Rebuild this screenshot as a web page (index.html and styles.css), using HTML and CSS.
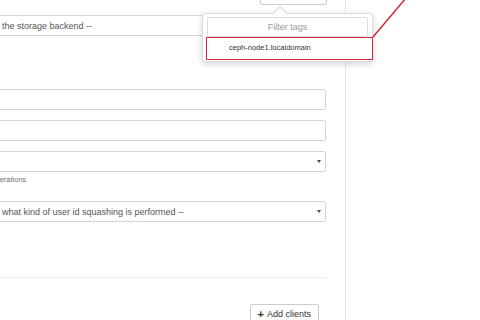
FILE: index.html
```html
<!DOCTYPE html>
<html lang="en">
<head>
  <meta charset="UTF-8">
  <title>NFS export</title>
  <link rel="stylesheet" href="styles.css">
</head>
<body>
  <div class="page">
    <div class="main">
      <form class="form">
        <div class="row-right top-row">
          <button type="button" class="btn">Add daemon</button>
        </div>

        <div class="select-wrap first">
          <select class="field">
            <option>-- Select the storage backend --</option>
          </select>
        </div>

        <input class="field gap-big" type="text">
        <input class="field" type="text">

        <div class="select-wrap">
          <select class="field">
            <option></option>
          </select>
        </div>
        <p class="help">Allows all operations</p>

        <div class="select-wrap squash">
          <select class="field">
            <option>-- Select what kind of user id squashing is performed --</option>
          </select>
        </div>

        <hr class="divider">

        <div class="row-right">
          <button type="button" class="btn"><span class="plus">+</span> Add clients</button>
        </div>
      </form>
    </div>
    <div class="side"></div>

    <!-- tag picker opened from the button above -->
    <div class="popover">
      <div class="popover-arrow"></div>
      <input class="filter" type="text" placeholder="Filter tags">
      <div class="tag-item">ceph-node1.localdomain</div>
    </div>

    <!-- annotation -->
    <div class="mark-box"></div>
    <svg class="mark-line" width="480" height="320" viewBox="0 0 480 320">
      <line x1="373" y1="37" x2="406" y2="-2" stroke="#d7263d" stroke-width="1.5"/>
    </svg>
  </div>
</body>
</html>
```

FILE: styles.css
```css
* { box-sizing: border-box; }
body { margin: 0; font-family: "Liberation Sans", Arial, sans-serif; background: #fff; }
.page { position: relative; display: flex; width: 480px; height: 320px; overflow: hidden; }

.main { width: 346px; border-right: 1px solid #e7e7e7; padding-right: 19px; }
.side { flex: 1; }

.form { margin-left: -42px; font-size: 9px; color: #555; }
.row-right { display: flex; justify-content: flex-end; }
.top-row { margin-top: -15px; margin-right: -1px; }

.btn { font: 9px "Liberation Sans", Arial, sans-serif; color: #333; background: #fff; border: 1px solid #ccc; border-radius: 2px; height: 20px; padding: 0 7px; display: flex; align-items: center; gap: 3px; }
.plus { font-weight: bold; font-size: 11px; line-height: 1; }

.field { display: block; width: 100%; height: 21px; border: 1px solid #d4d4d4; border-radius: 2px; background: #fff; font: 9px "Liberation Sans", Arial, sans-serif; color: #555; padding: 0 7px; margin: 0; -webkit-appearance: none; appearance: none; outline: none; }
input.field { margin-top: 10px; }
.select-wrap { position: relative; margin-top: 10px; }
.select-wrap::after { content: ""; position: absolute; right: 5px; top: 9px; border-left: 2.5px solid transparent; border-right: 2.5px solid transparent; border-top: 3px solid #444; }
.first { margin-top: 10px; }
.gap-big { margin-top: 53px !important; }

.help { margin: 3px 0 0; font-size: 7.5px; color: #737373; line-height: 10px; }
.squash { margin-top: 16px; }

.divider { border: 0; border-top: 1px solid #eee; margin: 55px 0 0; }
.form .row-right:last-child { margin-top: 26px; margin-right: 7px; }

.popover { position: absolute; left: 202px; top: 13px; width: 171px; height: 49px; padding: 3px 4px 2px; background: #fff; border: 1px solid #dcdcdc; border-radius: 3px; box-shadow: 0 2px 6px rgba(0, 0, 0, 0.18); }
.popover-arrow { position: absolute; left: 72px; top: -6px; width: 10px; height: 10px; background: #fff; border-left: 1px solid #dcdcdc; border-top: 1px solid #dcdcdc; transform: rotate(45deg); }
.filter { position: relative; display: block; width: 100%; height: 20px; border: 1px solid #ddd; border-radius: 2px; font: 9px "Liberation Sans", Arial, sans-serif; text-align: center; color: #555; outline: none; }
.filter::placeholder { color: #999; }
.tag-item { height: 22px; line-height: 22px; padding-left: 22px; font-size: 7.5px; color: #333; }

.mark-box { position: absolute; left: 206px; top: 37px; width: 167px; height: 23px; border: 1.5px solid #d7263d; }
.mark-line { position: absolute; left: 0; top: 0; pointer-events: none; }
```
